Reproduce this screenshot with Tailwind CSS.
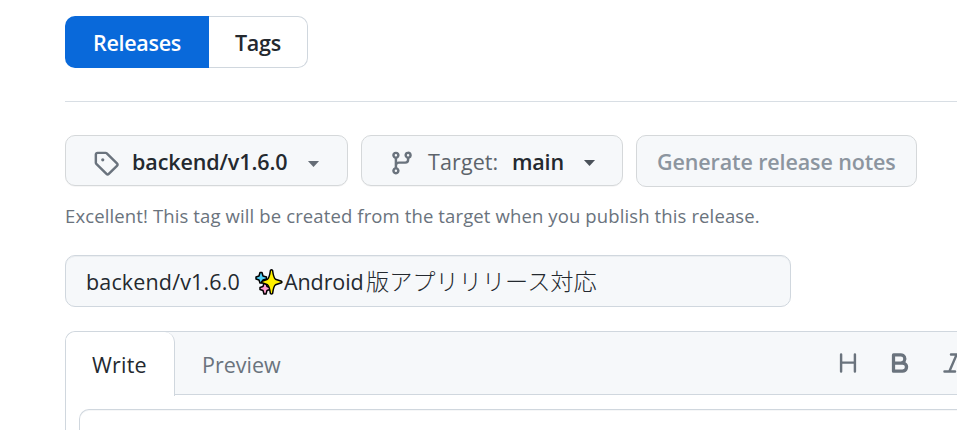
<!DOCTYPE html>
<html lang="ja">
<head>
<meta charset="utf-8">
<title>Releases</title>
<script src="https://cdn.jsdelivr.net/npm/@tailwindcss/browser@4"></script>
</head>
<body class="w-[957px] h-[430px] overflow-hidden bg-white pl-[65px] pt-4 font-['Open_Sans','Noto_Sans_CJK_JP',sans-serif] text-[21.5px] leading-8 text-[#24292f] whitespace-nowrap">
  <nav class="flex h-[52px] w-[243px] font-semibold">
    <a class="flex w-36 items-center rounded-l-[10px] bg-[#0969da] pl-7 pt-0.5 text-white"><span class="tracking-[-0.3px]">Releases</span></a>
    <a class="flex flex-1 items-center rounded-r-[10px] border border-l-0 border-[#d0d7de] pl-[26px] pt-0.5"><span class="tracking-[-0.3px]">Tags</span></a>
  </nav>
  <hr class="mt-[33px] border-[#d8dee4]">
  <div class="mt-[33px] flex h-[52px] items-start">
    <button class="flex h-[51px] w-[283px] items-center rounded-[10px] border border-[#d5d8da] bg-[#f6f8fa] pl-[27px] shadow-[0_1px_0_rgba(27,31,36,0.04)]">
      <svg class="mt-1 size-[26px] shrink-0 fill-[#6a737d]" viewBox="0 0 16 16"><path d="M1 7.775V2.75C1 1.784 1.784 1 2.75 1h5.025c.464 0 .91.184 1.238.513l6.25 6.25a1.75 1.75 0 0 1 0 2.474l-5.026 5.026a1.75 1.75 0 0 1-2.474 0l-6.25-6.25A1.752 1.752 0 0 1 1 7.775Zm1.5 0c0 .066.026.13.073.177l6.25 6.25a.25.25 0 0 0 .354 0l5.025-5.025a.25.25 0 0 0 0-.354l-6.25-6.25a.25.25 0 0 0-.177-.073H2.75a.25.25 0 0 0-.25.25ZM6 5a1 1 0 1 1 0 2 1 1 0 0 1 0-2Z"/></svg>
      <span class="ml-[13px] w-[156px] pt-0.5 text-left font-semibold tracking-[-0.1px]">backend/v1.6.0</span>
      <svg class="ml-[19px] mt-[7px] h-[6.5px] w-[13px] shrink-0 fill-[#656d76]" viewBox="0 0 13 7"><path d="M.5 0h12L6.5 6.5Z"/></svg>
    </button>
    <button class="ml-[13px] flex h-[51px] w-[262px] items-center rounded-[10px] border border-[#d5d8da] bg-[#f6f8fa] pl-[27px] shadow-[0_1px_0_rgba(27,31,36,0.04)]">
      <svg class="mt-1 size-[26px] shrink-0 fill-[#6a737d]" viewBox="0 0 16 16"><path d="M9.5 3.25a2.25 2.25 0 1 1 3 2.122V6A2.5 2.5 0 0 1 10 8.5H6a1 1 0 0 0-1 1v1.128a2.251 2.251 0 1 1-1.5 0V5.372a2.25 2.25 0 1 1 1.5 0v1.836A2.493 2.493 0 0 1 6 7h4a1 1 0 0 0 1-1v-.628A2.25 2.25 0 0 1 9.5 3.25Zm-6 0a.75.75 0 1 0 1.5 0 .75.75 0 0 0-1.5 0Zm8.25-.75a.75.75 0 1 0 0 1.5.75.75 0 0 0 0-1.5ZM4.25 12a.75.75 0 1 0 0 1.5.75.75 0 0 0 0-1.5Z"/></svg>
      <span class="ml-[13px] w-[84px] pt-0.5 text-left font-medium tracking-[0.1px] text-[#5d646b]">Target:</span>
      <span class="w-[53px] pt-0.5 text-left font-semibold tracking-[-0.2px]">main</span>
      <svg class="ml-[18px] mt-1.5 h-[6.5px] w-[13px] shrink-0 fill-[#4b525a]" viewBox="0 0 13 7"><path d="M.5 0h12L6.5 6.5Z"/></svg>
    </button>
    <button class="ml-[13px] flex h-[52px] w-[281px] items-center rounded-[10px] border border-[#d5d8da] bg-[#f6f8fa] pt-px pl-5 font-semibold tracking-[-0.12px] text-[#8c959f]"><span>Generate release notes</span></button>
  </div>
  <p class="mt-[13px] h-8 text-[18.5px] tracking-[0.12px] text-[#6a737d]"><span>Excellent! This tag will be created from the target when you publish this release.</span></p>
  <div class="mt-[23px] flex h-[52px] w-[726px] items-center rounded-[10px] border border-[#d0d7de] bg-[#f6f8fa] pl-5 shadow-[inset_0_1px_0_rgba(208,215,222,0.3)]">
    <span class="w-[155px] pt-0.5 tracking-[0.15px]">backend/v1.6.0</span>
    <svg class="ml-[14px] mt-0.5 h-[26px] w-[28px] shrink-0 stroke-black" viewBox="0 0 28 26" stroke-width="1.5" stroke-linejoin="round"><path fill="#50cff5" d="M5 3.500H7L8 7L11.500 8V10L8 11L7 14H5L4 11L1 10V8L4 7Z"/><path fill="#ff9fce" d="M9 14H11L12 17.500L15 18.500V20.500L12 21.500L11 25H9L8 21.500L5 20.500V18.500L8 17.500Z"/><path fill="#fff000" d="M15.400 1.500Q16.500 .2 17.600 1.500Q18.500 8.500 20.500 10.200L26.500 12.200Q27.300 13 26.500 13.800L20.500 15.800Q18.500 17.500 17.600 24.500Q16.500 25.500 15.400 24.500Q14.500 17.500 12.500 15.800L7 13.800Q6.300 13 7 12.200L12.500 10.200Q14.500 8.500 15.400 1.500Z"/></svg>
    <span class="ml-px w-[82px] pt-0.5 tracking-[-0.1px]">Android</span><span class="pb-[3px] font-['Noto_Sans_CJK_JP',sans-serif] text-[23.2px] font-light">版アプリリリース対応</span>
  </div>
  <section class="mt-6 h-[99px] overflow-hidden rounded-tl-[10px] border-l border-t border-[#d0d7de]">
    <div class="flex h-[63px] rounded-tl-[9px] bg-[#f6f8fa]">
      <div class="flex h-[64px] w-[109px] shrink-0 items-center rounded-tr-[10px] rounded-tl-[9px] border-r border-[#d0d7de] bg-white pl-[26px] pt-0.5"><span class="tracking-[0.2px]">Write</span></div>
      <div class="flex min-w-0 flex-1 border-b border-[#d0d7de]">
        <span class="flex w-[633px] shrink-0 items-center pl-[27px] pt-1 text-[#6a737d]"><span>Preview</span></span>
        <div class="flex items-center gap-[26px] fill-[#6a737d] pl-[27px]">
          <svg class="size-[26px] shrink-0" viewBox="0 0 16 16"><path d="M3.75 2a.75.75 0 0 1 .75.75V7h7V2.75a.75.75 0 0 1 1.500 0v10.500a.75.75 0 0 1-1.500 0V8.500h-7v4.750a.75.75 0 0 1-1.500 0V2.750A.75.75 0 0 1 3.750 2Z"/></svg>
          <svg class="size-[26px] shrink-0" viewBox="0 0 16 16"><path d="M4 2h4.500a3.501 3.501 0 0 1 2.852 5.530A3.499 3.499 0 0 1 9.500 14H4a1 1 0 0 1-1-1V3a1 1 0 0 1 1-1Zm1 7v3h4.500a1.500 1.500 0 0 0 0-3Zm3.500-2a1.500 1.500 0 0 0 0-3H5v3Z"/></svg>
          <svg class="ml-px size-[26px] shrink-0" viewBox="0 0 16 16"><path d="M6 2.750A.75.75 0 0 1 6.750 2h6.500a.75.75 0 0 1 0 1.500h-2.505l-3.858 9H9.250a.75.75 0 0 1 0 1.500h-6.500a.75.75 0 0 1 0-1.500h2.505l3.858-9H6.750A.75.75 0 0 1 6 2.750Z"/></svg>
        </div>
      </div>
    </div>
    <div class="ml-[13px] mt-[14px] h-[21px] rounded-tl-[10px] border-l border-t border-[#d0d7de] bg-white shadow-[inset_0_1px_0_rgba(208,215,222,0.2)]"></div>
  </section>
</body>
</html>
